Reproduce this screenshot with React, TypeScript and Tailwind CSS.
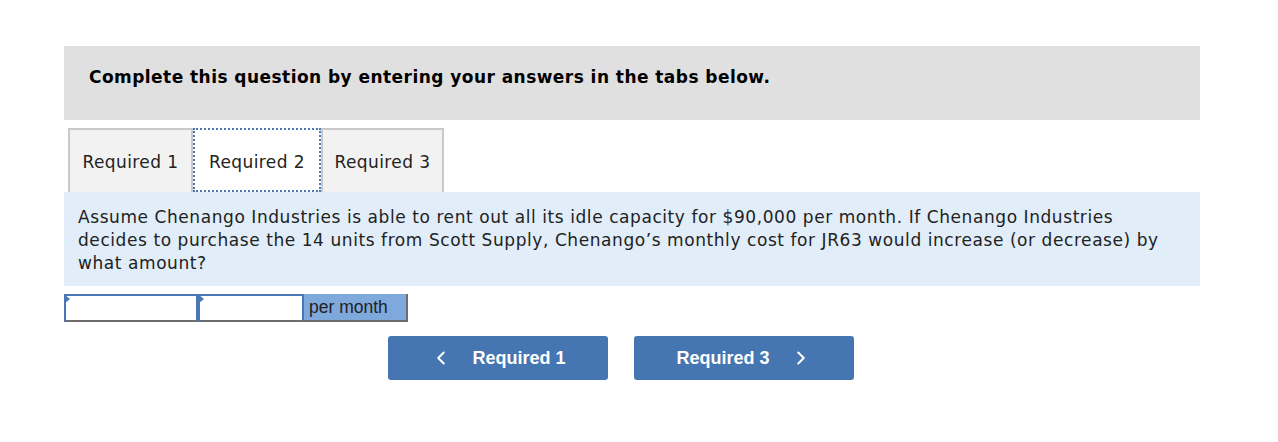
import { ChevronLeft, ChevronRight } from "lucide-react";

const verdana = "font-['Verdana','DejaVu_Sans',sans-serif]";
const arial = "font-['Liberation_Sans',Arial,sans-serif]";

function Tab({ label, width, active }: { label: string; width: string; active?: boolean }) {
  return active ? (
    <div className={`${width} h-[64px] pt-[5px] flex items-center justify-center bg-white border-2 border-dotted border-[#4a78b5] relative z-10`}>
      <span className="text-[17px] tracking-[0.4px] text-[#222]">{label}</span>
    </div>
  ) : (
    <div className={`${width} h-[64px] pt-[3px] flex items-center justify-center bg-[#f2f2f2] border-2 border-b-0 border-[#c9c9c9]`}>
      <span className="text-[17px] tracking-[0.4px] text-[#222]">{label}</span>
    </div>
  );
}

function AnswerInput({ width }: { width: string }) {
  return (
    <div className={`relative h-[28px] ${width} bg-white border-2 border-[#4a78b5] border-b-[#6d6d6d]`}>
      <span className="absolute -left-[1px] -top-[1px] w-0 h-0 border-y-[4px] border-y-transparent border-l-[5px] border-l-[#4a78b5]" />
    </div>
  );
}

export default function App() {
  return (
    <div className={`w-[1278px] h-[442px] bg-white pt-[46px] ${verdana}`}>
      <div className="ml-[64px] w-[1136px]">
        {/* Instructions */}
        <div className="h-[74px] bg-[#e0e0e0] flex items-center pl-[25px] pb-[10px]">
          <p className="text-[17px] tracking-[0.45px] font-bold text-black">
            Complete this question by entering your answers in the tabs below.
          </p>
        </div>

        {/* Tabs */}
        <div className="flex mt-[8px] pl-[4px]">
          <Tab label="Required 1" width="w-[125px]" />
          <Tab label="Required 2" width="w-[128px]" active />
          <Tab label="Required 3" width="w-[123px]" />
        </div>

        {/* Question */}
        <div className="bg-[#e1edf9] pl-[14px] pr-[27px] pt-[14px] h-[94px]">
          <p className="text-[17px] tracking-[0.57px] leading-[23px] text-[#222]">
            Assume Chenango Industries is able to rent out all its idle capacity for $90,000 per month. If Chenango Industries decides to purchase the 14 units from Scott Supply, Chenango’s monthly cost for JR63 would increase (or decrease) by what amount?
          </p>
        </div>

        {/* Answer row */}
        <div className="flex mt-[8px]">
          <AnswerInput width="w-[134px]" />
          <AnswerInput width="w-[106px]" />
          <div className="h-[28px] w-[104px] bg-[#7fa8dc] border-r-2 border-b-2 border-[#6d6d6d] flex items-center pl-[5px]">
            <span className={`text-[17.5px] text-[#222] ${arial}`}>per month</span>
          </div>
        </div>

        {/* Nav buttons */}
        <div className="flex gap-[26px] mt-[14px] ml-[324px]">
          <button className={`w-[220px] h-[44px] bg-[#4676b2] rounded-[3px] flex items-center justify-center gap-[20px] text-white font-bold text-[18px] ${arial}`}>
            <ChevronLeft size={22} strokeWidth={2.2} />
            Required 1
          </button>
          <button className={`w-[220px] h-[44px] bg-[#4676b2] rounded-[3px] flex items-center justify-center gap-[20px] text-white font-bold text-[18px] ${arial}`}>
            Required 3
            <ChevronRight size={22} strokeWidth={2.2} />
          </button>
        </div>
      </div>
    </div>
  );
}
